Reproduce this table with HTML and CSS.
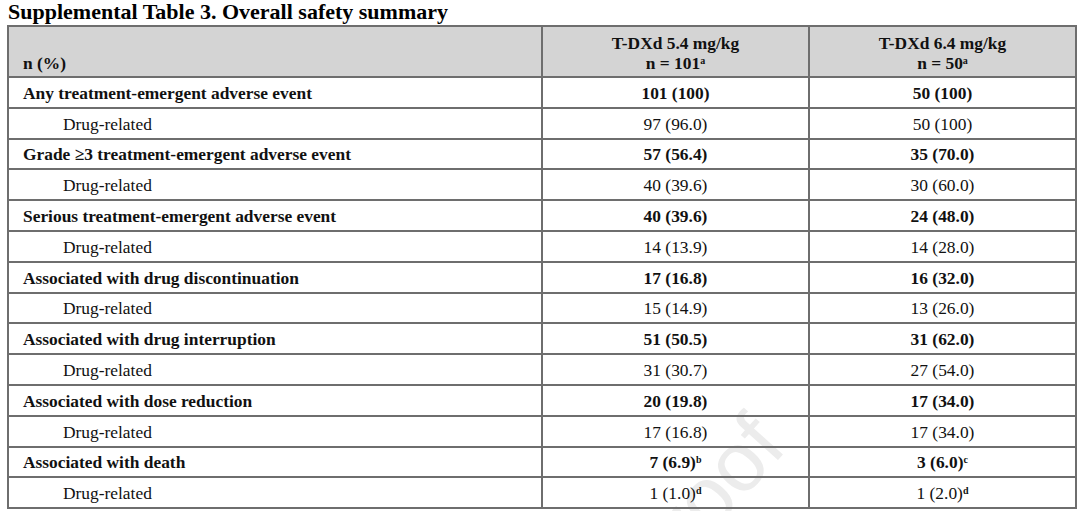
FILE: index.html
```html
<!DOCTYPE html>
<html lang="en">
<head>
<meta charset="utf-8">
<title>Supplemental Table 3. Overall safety summary</title>
<link rel="stylesheet" href="styles.css">
</head>
<body>
<div class="page">
  <h1 class="title">Supplemental Table 3. Overall safety summary</h1>
  <div class="watermark" aria-hidden="true">Proof</div>
  <table class="safety">
    <colgroup>
      <col class="c-label">
      <col class="c-val">
      <col class="c-val">
    </colgroup>
    <thead>
      <tr>
        <th class="h-label">n (%)</th>
        <th class="h-val">T-DXd 5.4 mg/kg<br>n = 101<sup>a</sup></th>
        <th class="h-val">T-DXd 6.4 mg/kg<br>n = 50<sup>a</sup></th>
      </tr>
    </thead>
    <tbody>
      <tr class="main"><td class="lbl">Any treatment-emergent adverse event</td><td>101 (100)</td><td>50 (100)</td></tr>
      <tr class="sub"><td class="lbl">Drug-related</td><td>97 (96.0)</td><td>50 (100)</td></tr>
      <tr class="main"><td class="lbl">Grade ≥3 treatment-emergent adverse event</td><td>57 (56.4)</td><td>35 (70.0)</td></tr>
      <tr class="sub"><td class="lbl">Drug-related</td><td>40 (39.6)</td><td>30 (60.0)</td></tr>
      <tr class="main"><td class="lbl">Serious treatment-emergent adverse event</td><td>40 (39.6)</td><td>24 (48.0)</td></tr>
      <tr class="sub"><td class="lbl">Drug-related</td><td>14 (13.9)</td><td>14 (28.0)</td></tr>
      <tr class="main"><td class="lbl">Associated with drug discontinuation</td><td>17 (16.8)</td><td>16 (32.0)</td></tr>
      <tr class="sub"><td class="lbl">Drug-related</td><td>15 (14.9)</td><td>13 (26.0)</td></tr>
      <tr class="main"><td class="lbl">Associated with drug interruption</td><td>51 (50.5)</td><td>31 (62.0)</td></tr>
      <tr class="sub"><td class="lbl">Drug-related</td><td>31 (30.7)</td><td>27 (54.0)</td></tr>
      <tr class="main"><td class="lbl">Associated with dose reduction</td><td>20 (19.8)</td><td>17 (34.0)</td></tr>
      <tr class="sub"><td class="lbl">Drug-related</td><td>17 (16.8)</td><td>17 (34.0)</td></tr>
      <tr class="main"><td class="lbl">Associated with death</td><td>7 (6.9)<sup>b</sup></td><td>3 (6.0)<sup>c</sup></td></tr>
      <tr class="sub"><td class="lbl">Drug-related</td><td>1 (1.0)<sup class="bold">d</sup></td><td>1 (2.0)<sup class="bold">d</sup></td></tr>
    </tbody>
  </table>
</div>
</body>
</html>
```

FILE: styles.css
```css
html, body {
  margin: 0;
  padding: 0;
  background: #ffffff;
  overflow: hidden;
}

body {
  font-family: "Liberation Serif", "Times New Roman", serif;
  color: #111111;
}

.page {
  position: relative;
  width: 1080px;
  height: 511px;
  overflow: hidden;
  padding-left: 7px;
  box-sizing: border-box;
}

.title {
  margin: 0;
  font-size: 22px;
  line-height: 24px;
  font-weight: bold;
  color: #000;
  padding-left: 1px;
}

.watermark {
  position: absolute;
  left: 664px;
  top: 606px;
  font-family: "Liberation Sans", Arial, sans-serif;
  font-size: 84px;
  line-height: 1;
  color: #ececec;
  transform-origin: 0 100%;
  transform: translateY(-100%) rotate(-48deg);
  z-index: 0;
  white-space: nowrap;
}

.safety {
  position: relative;
  z-index: 1;
  margin-top: 1px;
  width: 1068px;
  border-collapse: collapse;
  table-layout: fixed;
  font-size: 17.4px;
}

.c-label { width: 534px; }
.c-val { width: 267px; }

.safety th,
.safety td {
  border: 2px solid #6e6e6e;
  padding: 0;
}

.safety thead th {
  background: #d4d4d4;
  font-weight: bold;
  height: 46px;
  line-height: 20px;
}

.h-label {
  text-align: left;
  vertical-align: bottom;
  padding: 0 0 3px 14px !important;
  line-height: 19px !important;
}

.h-val {
  text-align: center;
  vertical-align: middle;
  padding-top: 3px !important;
}

.safety tbody td {
  height: 27.8px;
  line-height: 20px;
  text-align: center;
  vertical-align: middle;
  padding-top: 1px;
}

.safety tbody td.lbl {
  text-align: left;
}

.main td { font-weight: bold; }
.main td.lbl { padding-left: 14px; }
.sub td.lbl { padding-left: 54px; }

sup {
  font-size: 10px;
  line-height: 0;
  vertical-align: 0.55em;
}

sup.bold { font-weight: bold; }
```
